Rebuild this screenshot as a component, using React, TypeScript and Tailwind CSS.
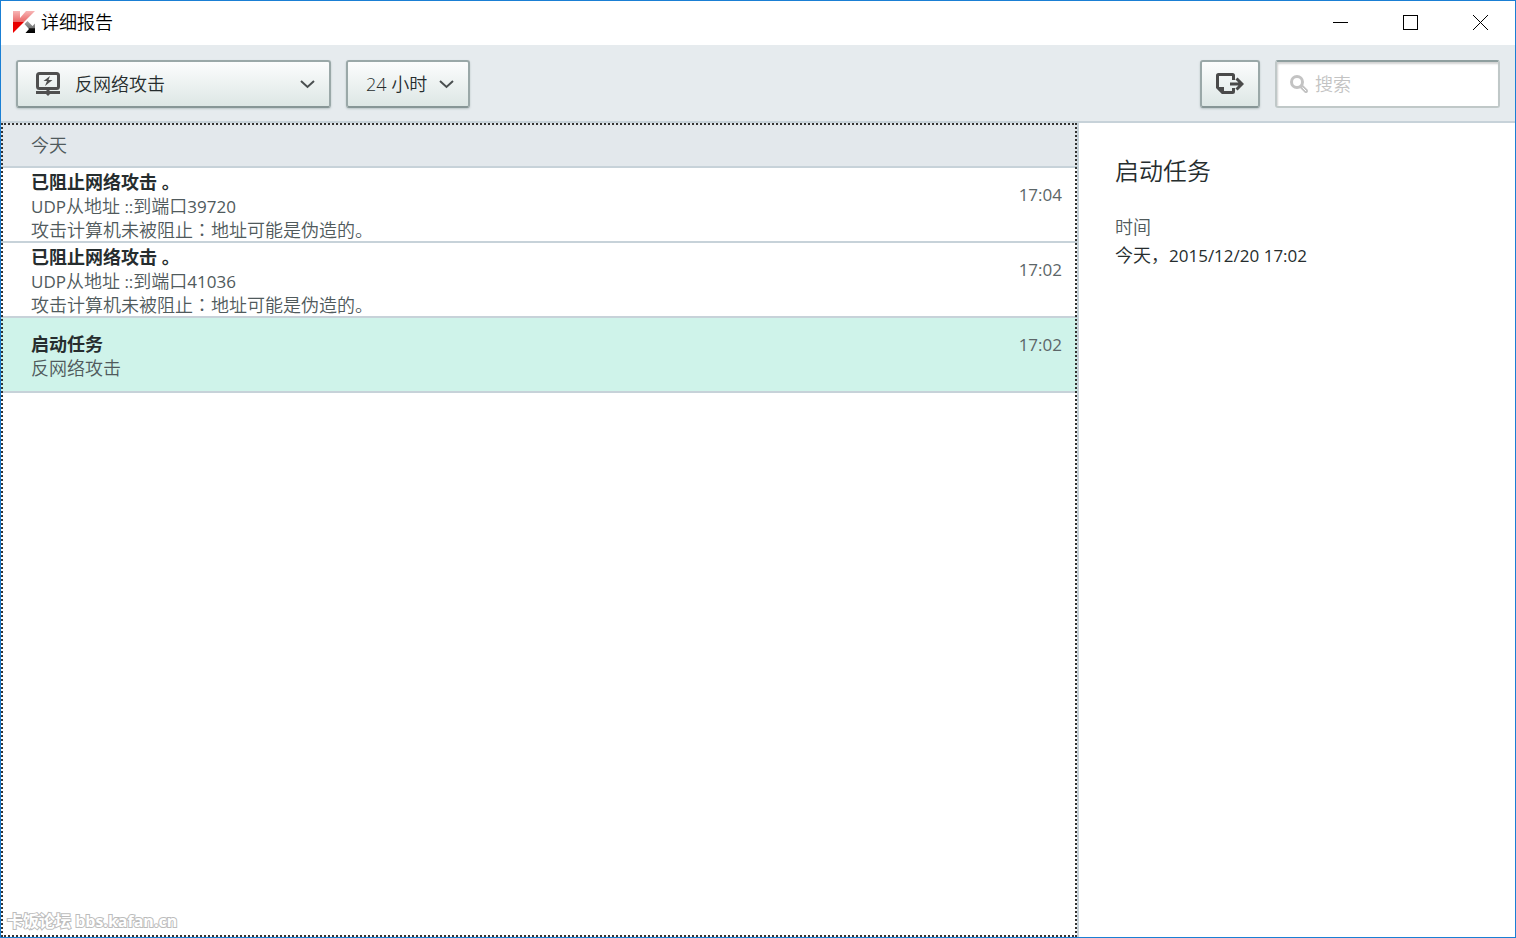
import { useState } from "react";

type Report = {
  id: number;
  title: string;
  time: string;
  lines: React.ReactNode[];
};

// latin glyphs sit one step smaller than the CJK text around them
const Latin = ({ children }: { children: React.ReactNode }) => (
  <span className="text-[17px] font-normal leading-none">{children}</span>
);

// the JP face centres the full-width colon
const spoofed = (
  <>
    攻击计算机未被阻止
    <span className="font-['Noto_Sans_CJK_JP',sans-serif] leading-none">：</span>
    地址可能是伪造的。
  </>
);

const reports: Report[] = [
  {
    id: 1,
    title: "已阻止网络攻击 。",
    time: "17:04",
    lines: [
      <>
        <Latin>UDP</Latin>从地址<Latin> ::</Latin>到端口<Latin>39720</Latin>
      </>,
      spoofed,
    ],
  },
  {
    id: 2,
    title: "已阻止网络攻击 。",
    time: "17:02",
    lines: [
      <>
        <Latin>UDP</Latin>从地址<Latin> ::</Latin>到端口<Latin>41036</Latin>
      </>,
      spoofed,
    ],
  },
  { id: 3, title: "启动任务", time: "17:02", lines: ["反网络攻击"] },
];

const Logo = () => (
  <svg width="24" height="24" viewBox="0 0 24 24" aria-hidden="true">
    <defs>
      <linearGradient id="red" x1="0" y1="0" x2="0" y2="1">
        <stop offset="0" stopColor="#f7b5b5" />
        <stop offset="0.48" stopColor="#ea6a6a" />
        <stop offset="0.5" stopColor="#e60000" />
        <stop offset="1" stopColor="#f00000" />
      </linearGradient>
      <linearGradient id="dark" x1="0" y1="0" x2="0" y2="1">
        <stop offset="0" stopColor="#a8a8a8" />
        <stop offset="0.55" stopColor="#777" />
        <stop offset="0.65" stopColor="#111" />
        <stop offset="1" stopColor="#000" />
      </linearGradient>
    </defs>
    <path d="M1 1h7v7l6-7h9L1 23z" fill="url(#red)" />
    <path d="M12.500 14l3-3 5 5 2.500-2.500V23H13.500l3.500-4z" fill="url(#dark)" />
  </svg>
);

const MonitorIcon = () => (
  <svg width="24" height="24" viewBox="0 0 24 24" aria-hidden="true">
    <rect x="1.5" y="1.5" width="21" height="15" rx="2" fill="none" stroke="#4f4f4f" strokeWidth="3" />
    <path d="M14 4L7.500 9h3.500l-2 5 7.500-6h-4z" fill="#4f4f4f" />
    <path d="M10.500 17h3v2H24v3H14l-2 2-2-2H0v-3h10.500z" fill="#4f4f4f" />
  </svg>
);

const Chevron = () => (
  <svg
    className="pointer-events-none absolute right-4 top-5"
    width="15"
    height="9"
    viewBox="0 0 15 9"
    aria-hidden="true"
  >
    <path d="M1 1l6.500 6L14 1" fill="none" stroke="#4a4f50" strokeWidth="2" />
  </svg>
);

const ExportIcon = () => (
  <svg width="28" height="22" viewBox="0 0 28 22" aria-hidden="true">
    <path
      d="M17.500 7V2.500q0-1-1-1h-14q-1 0-1 1v12l5 5h10q1 0 1-1V15"
      fill="none"
      stroke="#4a4a4a"
      strokeWidth="3"
    />
    <path d="M1 14h7v7z" fill="#4a4a4a" />
    <path d="M14 11h12M20.500 5.500l5.500 5.500-5.500 5.500" fill="none" stroke="#4a4a4a" strokeWidth="3" />
  </svg>
);

const SearchIcon = () => (
  <svg
    className="pointer-events-none absolute left-3.5 top-3.5"
    width="20"
    height="20"
    viewBox="0 0 20 20"
    aria-hidden="true"
  >
    <circle cx="8" cy="8" r="5.500" fill="none" stroke="#c3c3c3" strokeWidth="3" />
    <path d="M12.500 12.500l4.500 4.500" stroke="#c3c3c3" strokeWidth="4" strokeLinecap="round" />
    <path d="M13.500 13.500l3.500 3.500" stroke="#fff" strokeWidth="1" />
  </svg>
);

const TitleBar = () => (
  <header className="flex h-11 items-center bg-white pb-0.5 pl-[11px]">
    <Logo />
    <h1 className="ml-[5px] flex-1 text-lg font-[350] text-black">详细报告</h1>
    <button aria-label="最小化" className="grid h-full w-[70px] place-items-center">
      <svg width="15" height="15" viewBox="0 0 15 15" shapeRendering="crispEdges">
        <path d="M0 7.500h15" stroke="#000" />
      </svg>
    </button>
    <button aria-label="最大化" className="grid h-full w-[70px] place-items-center">
      <svg width="15" height="15" viewBox="0 0 15 15">
        <rect x="0.500" y="0.500" width="14" height="14" fill="none" stroke="#000" />
      </svg>
    </button>
    <button aria-label="关闭" className="grid h-full w-[70px] place-items-center">
      <svg width="15" height="15" viewBox="0 0 15 15">
        <path d="M0 0l15 15M15 0L0 15" stroke="#000" />
      </svg>
    </button>
  </header>
);

const raised =
  "h-12 rounded-[3px] border-2 border-[#9aa8a8] border-b-[#879696] bg-linear-to-b from-[#fcfdfd] to-[#dde7e5] shadow-[0_1px_2px_rgba(120,140,140,0.4)]";

const Toolbar = () => (
  <div className="flex items-center border-b-2 border-[#c7d2d9] bg-[#e6ebee] px-[15px] pb-[13px] pt-[15px] text-[#262d2e]">
    <div className="relative w-[315px]">
      <span className="pointer-events-none absolute left-5 top-3">
        <MonitorIcon />
      </span>
      <select aria-label="组件" className={`${raised} w-full appearance-none pl-[57px] text-lg`}>
        <option>反网络攻击</option>
      </select>
      <Chevron />
    </div>
    <div className="relative ml-[15px] w-[124px]">
      <select aria-label="时间段" className={`${raised} w-full appearance-none pl-[18px] text-lg`}>
        <option>24 小时</option>
      </select>
      <Chevron />
    </div>
    <button aria-label="导出" className={`${raised} ml-auto grid w-[60px] place-items-center`}>
      <ExportIcon />
    </button>
    <div className="relative ml-[15px] w-[225px]">
      <SearchIcon />
      <input
        type="search"
        aria-label="搜索"
        placeholder="搜索"
        className="h-12 w-full rounded-[3px] border-2 border-[#c0c8c8] border-t-[#8f9f9f] bg-white pl-[38px] text-lg shadow-[inset_1px_2px_2px_rgba(0,0,0,0.18)] placeholder:text-[#c3c3c3]"
      />
    </div>
  </div>
);

export default function App() {
  const [selectedId, setSelectedId] = useState(3);
  const selected = reports.find((r) => r.id === selectedId)!;

  return (
    <div className="flex min-h-screen flex-col border border-[#1a7fd4] bg-white font-['Open_Sans','Noto_Sans_CJK_SC',sans-serif] text-lg font-[350] text-[#505a5c]">
      <TitleBar />
      <Toolbar />
      <main className="flex flex-1">
        <section className="relative flex-1 border-r-2 border-[#c7d2d9]">
          <h2 className="h-[45px] border-b-2 border-[#c7d2d9] bg-[#e3e8ec] pl-[30px] font-[350] leading-[45px]">
            今天
          </h2>
          <ul>
            {reports.map((r) => (
              <li key={r.id}>
                <button
                  onClick={() => setSelectedId(r.id)}
                  className={`flex h-[75px] w-full items-center justify-between border-b-2 border-[#c7d2d9] pl-[30px] pr-[15px] pt-[3px] text-left ${
                    r.id === selectedId ? "bg-[#cff3ea]" : ""
                  }`}
                >
                  <span className="leading-6">
                    <strong className="block font-bold text-[#262d2e]">{r.title}</strong>
                    {r.lines.map((line, i) => (
                      <span key={i} className="block">
                        {line}
                      </span>
                    ))}
                  </span>
                  <span className="self-start pt-3 text-[17px] font-normal leading-6 text-[#5c6668]">
                    {r.time}
                  </span>
                </button>
              </li>
            ))}
          </ul>
          {/* keyboard focus frame */}
          <div className="pointer-events-none absolute inset-0 border-2 border-dotted border-[#333]" />
          <p className="absolute bottom-1 left-1.5 text-base font-bold leading-6 text-white [-webkit-text-stroke:2px_#bcbcbc] [paint-order:stroke]">
            卡饭论坛 bbs.kafan.cn
          </p>
        </section>
        <aside className="w-[436px] px-9 pt-[30px] text-[#262d2e]">
          <h2 className="text-2xl font-[350] leading-9">{selected.title}</h2>
          <dl className="mt-6 leading-7">
            <dt className="text-[#505a5c]">时间</dt>
            <dd>
              今天，<Latin>2015/12/20 {selected.time}</Latin>
            </dd>
          </dl>
        </aside>
      </main>
    </div>
  );
}
